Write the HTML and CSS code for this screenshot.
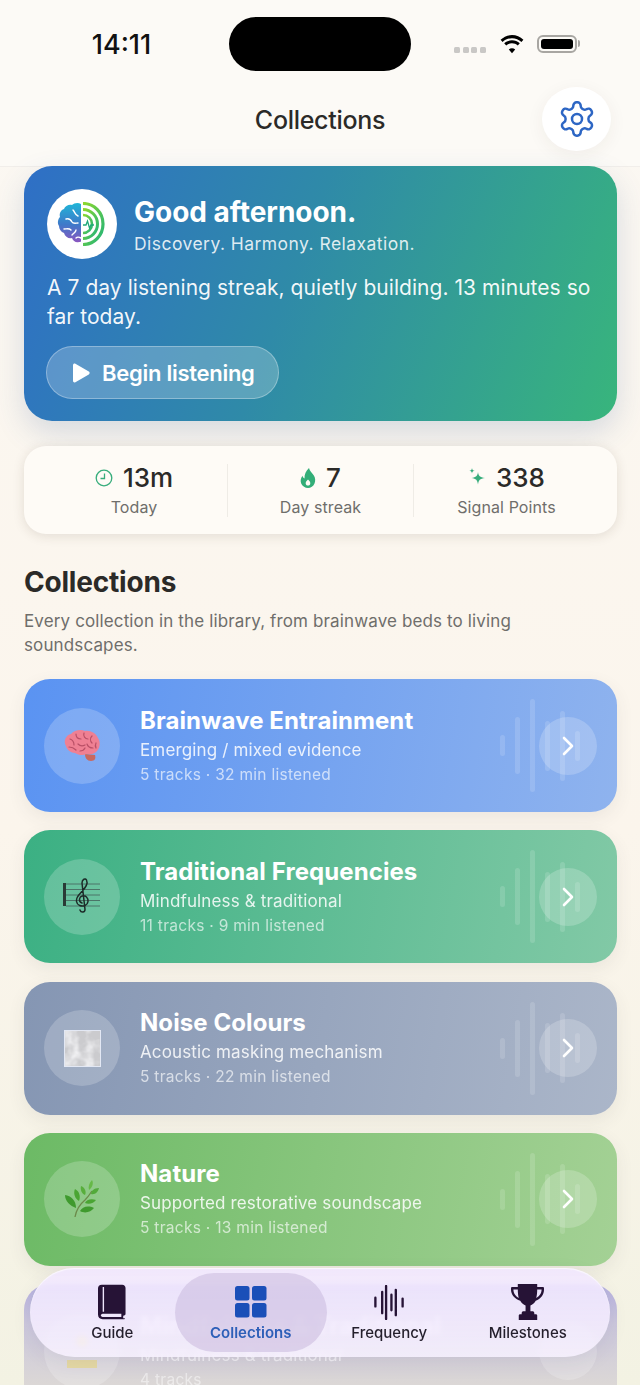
FILE: index.html
```html
<!DOCTYPE html>
<html>

<head>
  <title>Collections</title>
  <link rel="stylesheet" href="styles.css">
</head>

<body>
  <div class="screen">
    <header class="top">
      <div class="status">
        <span class="time">14:11</span>
        <div class="island"></div>
        <div class="status-icons">
          <span class="dots"><i></i><i></i><i></i><i></i></span>
          <svg class="wifi" width="26" height="20" viewBox="0 0 26 20">
            <path d="M13 4.200c3.600 0 6.900 1.400 9.400 3.700l2-2.200C21.300 2.800 17.300 1 13 1S4.700 2.800 1.600 5.700l2 2.200C6.100 5.600 9.400 4.200 13 4.200z" />
            <path d="M13 9.300c2.200 0 4.200.8 5.800 2.200l2-2.200c-2.100-1.900-4.900-3-7.800-3s-5.700 1.100-7.800 3l2 2.200c1.600-1.400 3.600-2.200 5.800-2.200z" />
            <path d="M13 14.300c-1.200 0-2.300.5-3.200 1.200l3.200 3.700 3.200-3.700c-.9-.7-2-1.200-3.200-1.200z" />
          </svg>
          <span class="battery"><b></b></span>
          <span class="battery-tip"></span>
        </div>
      </div>
      <div class="title-row">
        <span></span>
        <h1>Collections</h1>
        <button class="gear">
          <svg width="40" height="40" viewBox="0 0 24 24" fill="none" stroke="#2d66c4" stroke-width="1.500" stroke-linecap="round" stroke-linejoin="round">
            <path d="M12.220 2h-.44a2 2 0 0 0-2 2v.18a2 2 0 0 1-1 1.730l-.43.25a2 2 0 0 1-2 0l-.15-.08a2 2 0 0 0-2.730.73l-.22.38a2 2 0 0 0 .73 2.730l.15.1a2 2 0 0 1 1 1.720v.51a2 2 0 0 1-1 1.740l-.15.09a2 2 0 0 0-.73 2.730l.22.38a2 2 0 0 0 2.730.73l.15-.08a2 2 0 0 1 2 0l.43.25a2 2 0 0 1 1 1.730V20a2 2 0 0 0 2 2h.44a2 2 0 0 0 2-2v-.18a2 2 0 0 1 1-1.730l.43-.25a2 2 0 0 1 2 0l.15.08a2 2 0 0 0 2.730-.73l.22-.39a2 2 0 0 0-.73-2.730l-.15-.08a2 2 0 0 1-1-1.740v-.5a2 2 0 0 1 1-1.740l.15-.09a2 2 0 0 0 .73-2.730l-.22-.38a2 2 0 0 0-2.730-.73l-.15.08a2 2 0 0 1-2 0l-.43-.25a2 2 0 0 1-1-1.730V4a2 2 0 0 0-2-2z" />
            <circle cx="12" cy="12" r="3" />
          </svg>
        </button>
      </div>
    </header>

    <main class="content">
      <section class="hero">
        <div class="hero-head">
          <div class="logo">
            <svg width="50" height="44" viewBox="0 0 50 44" fill="none">
              <defs>
                <linearGradient id="brainGrad" x1="0" y1="0" x2="0" y2="1">
                  <stop offset="0" stop-color="#1fb6d8" />
                  <stop offset=".55" stop-color="#3f79c9" />
                  <stop offset="1" stop-color="#8a56c0" />
                </linearGradient>
                <linearGradient id="ringGrad" x1="0" y1="0" x2="1" y2="1">
                  <stop offset="0" stop-color="#8fd92c" />
                  <stop offset="1" stop-color="#1fb37a" />
                </linearGradient>
              </defs>
              <path d="M24 2c-3-2-7-1-9 1-3-1-7 1-8 4-3 1-5 4-4 8-2 2-3 6-1 9 0 3 2 6 5 7 1 4 5 6 8 5 1 3 4 5 7 4 1 0 2 0 2-1z" fill="url(#brainGrad)" />
              <path d="M16 8c2 2 2 5 5 6M9 17c3-1 5 1 6 3s4 1 6 1M7 27c3 0 5-1 7 1M15 33c2-2 4-3 4-5M19 36c1-1 3-1 5 0" stroke="#fff" stroke-width="1.400" stroke-linecap="round" />
              <path d="M26 1.500c11 0 20 9 20 20.500S37 42.500 26 42.500" stroke="url(#ringGrad)" stroke-width="3.200" />
              <path d="M26 7.500c8 0 14.500 6.500 14.500 14.500S34 36.500 26 36.500" stroke="url(#ringGrad)" stroke-width="3" />
              <path d="M26 13c5 0 9 4 9 9s-4 9-9 9" stroke="url(#ringGrad)" stroke-width="2.600" />
              <path d="M26 23h3l1.500-4 2 7 1.500-3h3" stroke="#1fa87a" stroke-width="1.300" />
            </svg>
          </div>
          <div class="hero-names">
            <h2 class="hero-title">Good afternoon.</h2>
            <p class="hero-tag">Discovery. Harmony. Relaxation.</p>
          </div>
        </div>
        <p class="hero-text">A 7 day listening streak, quietly building. 13 minutes so far today.</p>
        <button class="begin">
          <svg width="18" height="20" viewBox="0 0 18 20"><path d="M1 2.200C1 .900 2.300.2 3.400.8l13.400 7.800c1.100.6 1.100 2.200 0 2.800L3.400 19.200C2.300 19.800 1 19.100 1 17.800z" fill="#fff" /></svg>
          Begin listening
        </button>
      </section>

      <section class="stats">
        <div class="stat">
          <div class="stat-value">
            <svg width="18" height="18" viewBox="0 0 18 18" fill="none" stroke="#37ad7c" stroke-width="1.300"><circle cx="9" cy="9" r="7.800" /><path d="M9.500 4.500V9.500H5.500" /></svg>
            13m
          </div>
          <div class="stat-label">Today</div>
        </div>
        <div class="stat">
          <div class="stat-value">
            <svg width="16" height="20" viewBox="0 0 16 20"><path fill-rule="evenodd" d="M9 0c.5 3 3 4.500 4.700 7.300C15.500 10 15.600 13 14.500 15.500 13.300 18.300 10.800 20 8 20s-5.500-1.700-6.700-4.300C.2 13.200.5 10.200 2.500 7.800c.3 1.300 1 2.200 2 2.700C4.300 6.500 6 2.500 9 0zM8 11.500c-1.800 1.500-2.700 3-2.200 4.500.4 1 1.200 1.500 2.200 1.500s1.800-.5 2.200-1.500c.5-1.500-.4-3-2.200-4.500z" fill="#33ae78" /></svg>
            7
          </div>
          <div class="stat-label">Day streak</div>
        </div>
        <div class="stat">
          <div class="stat-value">
            <svg width="18" height="22" viewBox="0 0 18 20"><path d="M10 4c.6 4 1.800 5.300 7 6-5.200.8-6.400 2-7 6.500C9.400 12 8.200 10.800 3.500 10 8.200 9.300 9.400 8 10 4zM4 0c.3 1.800.9 2.400 2.700 2.800C4.900 3.100 4.300 3.800 4 5.500 3.700 3.800 3.100 3.100 1.300 2.800 3.100 2.400 3.700 1.800 4 0z" fill="#37ad7c" /></svg>
            338
          </div>
          <div class="stat-label">Signal Points</div>
        </div>
      </section>

      <section class="intro">
        <h2>Collections</h2>
        <p>Every collection in the library, from brainwave beds to living soundscapes.</p>
      </section>

      <section class="cards">
        <article class="card card-blue">
          <div class="bars"><i></i><i></i><i></i><i></i><i></i><i></i></div>
          <div class="card-icon">
            <svg width="38" height="33" viewBox="0 0 38 33" fill="none">
              <path d="M22 25c0 4 2 7 6 7s5-3 4-6z" fill="#c9685f" />
              <path d="M3 17C0 12 3 6 8 5c3-4 10-5 14-3 5-1 11 2 13 7 3 4 2 11-2 14-3 3-7 2-10 2-3 2-8 1-11-1-4 0-8-3-9-7z" fill="#ef8093" />
              <path d="M7 10c3 1 4 3 4 6M13 5c0 3 2 5 5 5M21 4c-1 3 1 6 4 6M29 7c-2 2-2 5 0 7M6 18c3 0 5 1 7 3M15 15c2 2 5 2 7 1M24 15c1 3 3 4 6 4M17 22c2 0 4-1 5-3M33 14c-1 2-1 3 0 5" stroke="#b94f66" stroke-width="1.200" stroke-linecap="round" />
            </svg>
          </div>
          <div class="card-text">
            <h3>Brainwave Entrainment</h3>
            <p class="card-sub">Emerging / mixed evidence</p>
            <p class="card-meta">5 tracks · 32 min listened</p>
          </div>
          <div class="go"><svg width="16" height="22" viewBox="0 0 16 22" fill="none" stroke="#fff" stroke-width="2.600" stroke-linecap="round" stroke-linejoin="round"><path d="M4 3l8 8-8 8" /></svg></div>
        </article>

        <article class="card card-green">
          <div class="bars"><i></i><i></i><i></i><i></i><i></i><i></i></div>
          <div class="card-icon">
            <svg width="38" height="38" viewBox="0 0 38 38" fill="none">
              <rect x="0" y="5" width="3" height="23" fill="#2a3a36" />
              <path d="M3 6h34M3 11.500h34M3 17h34M3 22.500h34M3 28h34" stroke="#44605a" stroke-width=".8" />
              <path d="M17 32c1 3 5 2.500 5-.5L19 5c0-4 3.500-5 4.500-3 1.500 3-1 8-5.500 12.500-3.500 3.500-5 6-4.500 9 .7 4 5 5.500 8.500 4 3.500-1.500 4-6 1.500-8.500-2.500-2.200-6.500-1-7 2-.3 2 1 3.500 2.500 4" stroke="#1d2b28" stroke-width="1.500" stroke-linecap="round" />
            </svg>
          </div>
          <div class="card-text">
            <h3>Traditional Frequencies</h3>
            <p class="card-sub">Mindfulness &amp; traditional</p>
            <p class="card-meta">11 tracks · 9 min listened</p>
          </div>
          <div class="go"><svg width="16" height="22" viewBox="0 0 16 22" fill="none" stroke="#fff" stroke-width="2.600" stroke-linecap="round" stroke-linejoin="round"><path d="M4 3l8 8-8 8" /></svg></div>
        </article>

        <article class="card card-grey">
          <div class="bars"><i></i><i></i><i></i><i></i><i></i><i></i></div>
          <div class="card-icon">
            <svg width="37" height="37" viewBox="0 0 37 37">
              <filter id="cloud" x="0" y="0" width="100%" height="100%">
                <feTurbulence type="fractalNoise" baseFrequency=".07" numOctaves="3" seed="6" />
                <feColorMatrix values="0 0 0 0 .6  0 0 0 0 .6  0 0 0 0 .62  2.200 0 0 0 -.5" />
              </filter>
              <rect width="37" height="37" fill="#f6f6f8" />
              <rect width="37" height="37" filter="url(#cloud)" />
              <rect x=".5" y=".5" width="36" height="36" fill="none" stroke="#e3e8f4" />
            </svg>
          </div>
          <div class="card-text">
            <h3>Noise Colours</h3>
            <p class="card-sub">Acoustic masking mechanism</p>
            <p class="card-meta">5 tracks · 22 min listened</p>
          </div>
          <div class="go"><svg width="16" height="22" viewBox="0 0 16 22" fill="none" stroke="#fff" stroke-width="2.600" stroke-linecap="round" stroke-linejoin="round"><path d="M4 3l8 8-8 8" /></svg></div>
        </article>

        <article class="card card-nature">
          <div class="bars"><i></i><i></i><i></i><i></i><i></i><i></i></div>
          <div class="card-icon">
            <svg width="34" height="38" viewBox="0 0 34 38" fill="none">
              <path d="M10 37c1-6 4-12 10-17 3-3 5-6 7-9" stroke="#6c8a4a" stroke-width="1.300" />
              <path d="M11 28C5 26 0 21 0 15c6 1 11 5 11 13z" fill="#3f9a2e" />
              <path d="M14 21c-4-2-6-8-4-12 4 2 6 7 4 12z" fill="#4aa533" />
              <path d="M20 15c-3-1-5-5-4-9 3 1 6 5 4 9z" fill="#58ae3c" />
              <path d="M24 10c-1-3 0-7 3-10 2 3 0 8-3 10z" fill="#66b947" />
              <path d="M26 14c0-3 3-6 8-6-1 4-4 7-8 6z" fill="#52aa3a" />
              <path d="M20 23c1-3 6-5 11-3-2 3-7 5-11 3z" fill="#4aa533" />
              <path d="M15 31c2-4 8-6 14-3-3 4-9 6-14 3z" fill="#3f9a2e" />
            </svg>
          </div>
          <div class="card-text">
            <h3>Nature</h3>
            <p class="card-sub">Supported restorative soundscape</p>
            <p class="card-meta">5 tracks · 13 min listened</p>
          </div>
          <div class="go"><svg width="16" height="22" viewBox="0 0 16 22" fill="none" stroke="#fff" stroke-width="2.600" stroke-linecap="round" stroke-linejoin="round"><path d="M4 3l8 8-8 8" /></svg></div>
        </article>

        <article class="card card-lilac">
          <div class="card-icon">
            <svg class="faded" width="34" height="38" viewBox="0 0 34 38"><circle cx="17" cy="9" r="6" fill="#f6e06a" /><rect x="2" y="28" width="30" height="8" fill="#ecd873" /></svg>
          </div>
          <div class="card-text">
            <h3>Mindfulness &amp; Traditional</h3>
            <p class="card-sub">Mindfulness &amp; traditional</p>
            <p class="card-meta">4 tracks</p>
          </div>
          <div class="go"></div>
        </article>
      </section>
    </main>

    <nav class="tabs">
      <div class="tab">
        <svg width="28" height="36" viewBox="0 0 30 37">
          <path fill-rule="evenodd" d="M4 0h22c2 0 3.500 1.500 3.500 3.500V31c0 1-.7 1.700-1.500 2l-1 .2V36h1c.7 0 1 .3 1 .5s-.3.500-1 .500H5c-3 0-5-2-5-5V4c0-2.500 1.500-4 4-4zM5 2.500v26.500h1.500V2.500zM6 31c-1.800 0-3 .5-3 1.800S4.200 34.700 6 34.700h19V31z" fill="#261336" />
        </svg>
        <span>Guide</span>
      </div>
      <div class="tab tab-on">
        <svg width="32" height="32" viewBox="0 0 32 32" fill="#1a4fb8">
          <rect x="0" y="0" width="14.500" height="14.500" rx="2.500" />
          <rect x="17" y="0" width="14.500" height="14.500" rx="2.500" />
          <rect x="0" y="17" width="14.500" height="14.500" rx="2.500" />
          <rect x="17" y="17" width="14.500" height="14.500" rx="2.500" />
        </svg>
        <span>Collections</span>
      </div>
      <div class="tab">
        <svg width="32" height="35" viewBox="0 0 32 36" stroke="#261336" stroke-width="2.400" stroke-linecap="round">
          <path d="M2 13v9M9 7v22M13 1v34M23 5v26M30 14v8M18.500 10v16" />
        </svg>
        <span>Frequency</span>
      </div>
      <div class="tab">
        <svg width="33" height="36" viewBox="0 0 34 37">
          <path fill-rule="evenodd" d="M7 0h20v3h6c.6 0 1 .4 1 1v2c0 5-3.500 9.500-8.500 11.300C24 20 22 21.500 20 22v6h2c1 0 1.500.5 2 1.500V31h1.500c1 0 1.500.6 1.500 1.500V37H8v-4.500C8 31.600 8.500 31 9.500 31H11v-1.500c.5-1 1-1.500 2-1.500h2v-6c-2-.5-4-2-5.500-4.700C4 15.500 0 11 0 6V4c0-.6.400-1 1-1h6zM2.500 5.500V6c0 3.500 2.300 6.800 5.500 8.400C7.400 12 7 9 7 5.500zM27 5.500c0 3.500-.4 6.500-1 8.900 3.200-1.600 5.500-4.900 5.500-8.400v-.5z" fill="#261336" />
        </svg>
        <span>Milestones</span>
      </div>
    </nav>
  </div>
</body>

</html>
```

FILE: styles.css
```css
* {
  box-sizing: border-box;
}

html,
body {
  margin: 0;
  padding: 0;
}

body {
  font-family: 'Inter', 'Liberation Sans', sans-serif;
  color: #2b2a28;
}

h1,
h2,
h3,
p {
  margin: 0;
}

.screen {
  position: relative;
  width: 640px;
  height: 1385px;
  overflow: hidden;
  background: linear-gradient(180deg, #fbf8f3 0%, #fbf5ec 60%, #f3f2e3 100%);
}

/* header */
.top {
  height: 167px;
  background-color: #fcfaf6;
  border-bottom: 1px solid #f1eeea;
  padding-top: 17px;
}

.status {
  display: grid;
  grid-template-columns: 229px 182px 229px;
  height: 54px;
  align-items: center;
}

.time {
  text-align: center;
  font-size: 27px;
  font-weight: 500;
  color: #111;
  padding-left: 14px;
}

.island {
  height: 54px;
  background-color: #000;
  border-radius: 27px;
}

.status-icons {
  display: flex;
  align-items: center;
  padding-left: 43px;
  margin-top: -1px;
}

.dots {
  display: flex;
  gap: 2.600px;
  margin-top: 13px;
}

.dots i {
  width: 6px;
  height: 6px;
  border-radius: 1.500px;
  background-color: #c9c8c6;
}

.wifi {
  fill: #000;
  margin-left: 13px;
}

.battery {
  width: 40px;
  height: 18px;
  margin-left: 12px;
  border: 2px solid #a8a6a2;
  border-radius: 6px;
  padding: 2px;
  display: flex;
}

.battery b {
  flex: 1;
  background-color: #000;
  border-radius: 3px;
}

.battery-tip {
  width: 2px;
  height: 7px;
  margin-left: 1px;
  background-color: #a8a6a2;
  border-radius: 0 2px 2px 0;
}

.title-row {
  display: grid;
  grid-template-columns: 1fr auto 1fr;
  align-items: center;
  height: 64px;
  margin-top: 16px;
  padding-right: 29px;
  padding-left: 29px;
}

.title-row h1 {
  font-size: 25px;
  font-weight: 500;
  letter-spacing: -.3px;
  margin-top: 2px;
}

.gear {
  justify-self: end;
  width: 69px;
  height: 64px;
  border: none;
  border-radius: 50%;
  background-color: #fff;
  padding: 0;
  display: flex;
  align-items: center;
  justify-content: center;
  box-shadow: 0 4px 18px rgba(60, 50, 30, .06);
}

/* scroll content */
.content {
  padding: 0 23px 0 24px;
  margin-top: -1px;
}

.hero {
  height: 255px;
  padding: 23px 23px 0;
  border-radius: 28px;
  background: linear-gradient(110deg, #2f6fc6 0%, #2f8aa8 45%, #38b57c 100%);
  color: #fff;
  box-shadow: 0 12px 30px rgba(50, 90, 150, .18);
}

.hero-head {
  display: flex;
  align-items: center;
  gap: 17px;
}

.logo {
  width: 70px;
  height: 70px;
  border-radius: 50%;
  background-color: #fff;
  display: flex;
  align-items: center;
  justify-content: center;
  flex: none;
}

.hero-names {
  margin-top: 3px;
}

.hero-title {
  font-size: 28px;
  font-weight: 700;
  letter-spacing: -.03px;
  line-height: 34px;
}

.hero-tag {
  font-size: 17.500px;
  letter-spacing: .45px;
  line-height: 26px;
  margin-top: 2px;
  color: rgba(255, 255, 255, .85);
}

.hero-text {
  font-size: 21px;
  letter-spacing: .05px;
  line-height: 29px;
  margin-top: 14px;
  color: rgba(255, 255, 255, .95);
}

.begin {
  display: flex;
  align-items: center;
  gap: 12px;
  width: 233px;
  height: 53px;
  margin-top: 15px;
  margin-left: -1px;
  padding: 0 0 0 25px;
  border: 1px solid rgba(255, 255, 255, .3);
  border-radius: 27px;
  background-color: rgba(255, 255, 255, .22);
  color: #fff;
  font-family: inherit;
  font-size: 22px;
  font-weight: 600;
  letter-spacing: -.27px;
}

.stats {
  display: grid;
  grid-template-columns: repeat(3, 1fr);
  height: 88px;
  margin-top: 25px;
  padding: 18px 18px 18px 17px;
  border-radius: 22px;
  background-color: #fefbf6;
  box-shadow: 0 2px 12px rgba(60, 50, 30, .13);
}

.stat {
  text-align: center;
}

.stat + .stat {
  border-left: 1px solid #efece6;
}

.stat-value {
  display: flex;
  align-items: center;
  justify-content: center;
  gap: 10px;
  font-size: 26px;
  font-weight: 500;
  line-height: 28px;
}

.stat-label {
  font-size: 16px;
  letter-spacing: .1px;
  color: #6f6e6b;
  margin-top: 5px;
  line-height: 20px;
}

.intro {
  margin-top: 31px;
}

.intro h2 {
  font-size: 28px;
  font-weight: 700;
  letter-spacing: -.2px;
  line-height: 34px;
}

.intro p {
  font-size: 17px;
  letter-spacing: .13px;
  line-height: 24px;
  margin-top: 10px;
  color: #6f6e6b;
}

.cards {
  display: flex;
  flex-direction: column;
  gap: 18.250px;
  margin-top: 22px;
}

.card {
  position: relative;
  display: flex;
  align-items: center;
  height: 133px;
  padding: 0 20px;
  border-radius: 26px;
  color: #fff;
  box-shadow: 0 6px 18px rgba(60, 60, 80, .08);
}

.card-blue {
  background: linear-gradient(100deg, #5a93f2 0%, #8fb3ee 100%);
}

.card-green {
  background: linear-gradient(100deg, #3bb083 0%, #82c9a6 100%);
}

.card-grey {
  background: linear-gradient(100deg, #8596b3 0%, #abb6c9 100%);
}

.card-nature {
  background: linear-gradient(100deg, #6cba65 0%, #a4d195 100%);
}

/* last card runs under the tab bar and washes out */
.card-lilac {
  background: linear-gradient(180deg, #b5b0de 0%, #cbc7dc 30%, #dbd7d6 75%);
  box-shadow: none;
  color: rgba(255, 255, 255, .75);
}

.card-icon {
  width: 76px;
  height: 76px;
  flex: none;
  border-radius: 50%;
  background-color: rgba(255, 255, 255, .2);
  display: flex;
  align-items: center;
  justify-content: center;
}

.faded {
  opacity: .55;
}

.card-text {
  flex: 1;
  margin-left: 20px;
}

.card-text h3 {
  font-size: 24px;
  font-weight: 700;
  letter-spacing: .08px;
  line-height: 30px;
}

.card-sub {
  font-size: 17px;
  letter-spacing: .14px;
  line-height: 24px;
  margin-top: 2px;
  opacity: .85;
}

.card-meta {
  font-size: 15.500px;
  letter-spacing: .28px;
  line-height: 22px;
  margin-top: 2px;
  opacity: .65;
}

.go {
  position: relative;
  width: 58px;
  height: 58px;
  flex: none;
  border-radius: 50%;
  background-color: rgba(255, 255, 255, .2);
  display: flex;
  align-items: center;
  justify-content: center;
}

/* waveform sits behind the chevron */
.bars {
  position: absolute;
  top: 0;
  bottom: 0;
  left: 476px;
  display: flex;
  align-items: center;
  gap: 10px;
}

.bars i {
  width: 5px;
  border-radius: 3px;
  background-color: rgba(255, 255, 255, .14);
}

.bars i:nth-child(1) {
  height: 21px;
}

.bars i:nth-child(2) {
  height: 57px;
}

.bars i:nth-child(3) {
  height: 93px;
}

.bars i:nth-child(4) {
  height: 50px;
}

.bars i:nth-child(5) {
  height: 70px;
}

.bars i:nth-child(6) {
  height: 30px;
}

.tabs {
  position: absolute;
  left: 30px;
  top: 1268px;
  width: 580px;
  height: 89px;
  display: grid;
  grid-template-columns: repeat(4, 138.500px);
  padding: 5px 13px;
  border-radius: 45px;
  background: linear-gradient(180deg, rgba(241, 231, 255, .9) 0%, rgba(247, 241, 255, .84) 100%);
  backdrop-filter: blur(2px);
  box-shadow: 0 6px 20px rgba(70, 50, 110, .08), inset 0 1px 1px rgba(255, 255, 255, .7);
}

.tab {
  display: flex;
  flex-direction: column;
  align-items: center;
  justify-content: flex-end;
  gap: 3px;
  padding-bottom: 10px;
  font-size: 15px;
  font-weight: 500;
  color: #241f2c;
}

.tab-on {
  margin: 0 -7px;
  border-radius: 40px;
  background-color: rgba(205, 190, 225, .62);
  color: #2d5fb8;
  font-weight: 600;
  gap: 5px;
}
```
